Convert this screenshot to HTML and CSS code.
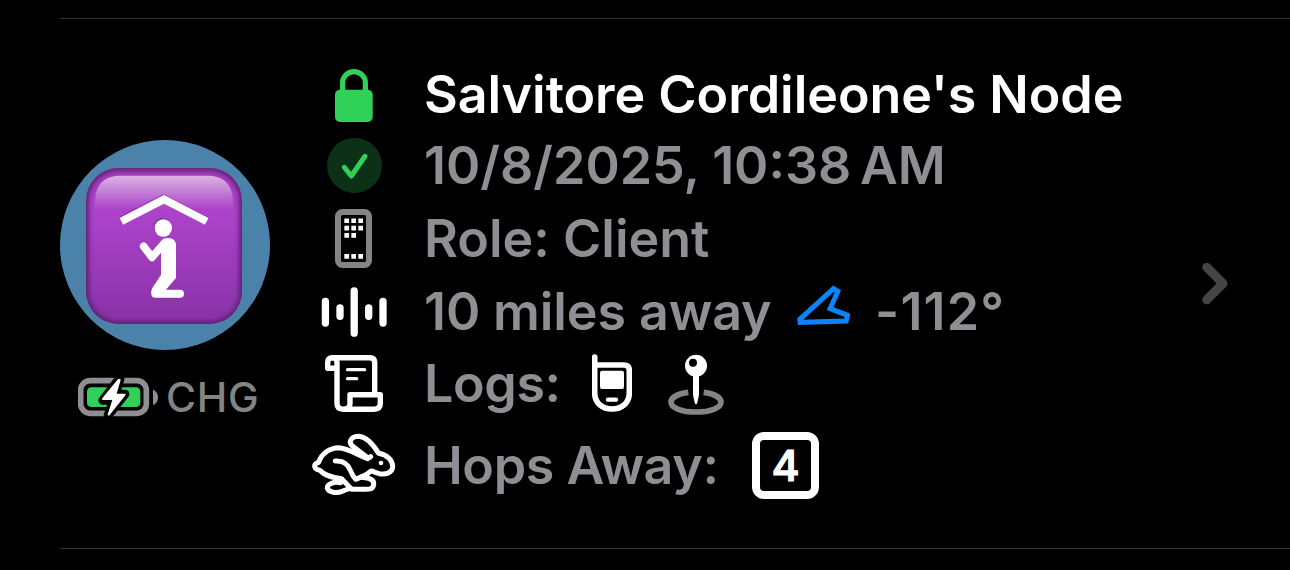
FILE: index.html
```
<!DOCTYPE html>
<html lang="en">
<head>
  <meta charset="UTF-8">
  <meta name="viewport" content="width=device-width, initial-scale=1.0">
  <title>Nodes</title>
  <link rel="stylesheet" href="styles.css">
</head>
<body>
  <div class="node-item">
    <div class="node-badge">
      <svg class="avatar" viewBox="30 30 630 630">
        <defs>
          <linearGradient id="tile" x1="0" y1="0" x2="0" y2="1">
            <stop offset="0" stop-color="#a03cb8"/>
            <stop offset="0.28" stop-color="#ad43cb"/>
            <stop offset="1" stop-color="#8732a6"/>
          </linearGradient>
          <linearGradient id="gloss" x1="0" y1="0" x2="0" y2="1">
            <stop offset="0" stop-color="#fff" stop-opacity="0.62"/>
            <stop offset="1" stop-color="#fff" stop-opacity="0"/>
          </linearGradient>
          <filter id="soft" x="-10%" y="-10%" width="120%" height="120%">
            <feGaussianBlur stdDeviation="7"/>
          </filter>
          <clipPath id="tileClip"><rect x="108" y="114" width="468" height="468" rx="98"/></clipPath>
        </defs>
        <circle cx="345" cy="345" r="315" fill="#4a82aa"/>
        <rect x="108" y="114" width="468" height="468" rx="98" fill="url(#tile)"/>
        <g clip-path="url(#tileClip)">
          <rect x="108" y="114" width="468" height="468" rx="98" fill="none" stroke="#5c2070" stroke-width="17" filter="url(#soft)"/>
        </g>
        <path d="M135 238V218C135 160 165 137 215 137H469C519 137 549 160 549 218V238Z" fill="url(#gloss)"/>
        <g transform="translate(-2 -3)" fill="none" stroke="#71348a" stroke-opacity="0.6">
          <path d="M214 274L342 208L470 274" stroke-width="23"/>
          <circle cx="340" cy="294" r="26" fill="#71348a"/>
        </g>
        <g fill="none" stroke="#fff" stroke-linecap="round" stroke-linejoin="round">
          <path d="M214 274L342 208L470 274" stroke-width="23" stroke-linecap="butt" stroke-linejoin="miter"/>
          <path d="M281 349L306 382L344 338" stroke-width="23"/>
          <path d="M316 491H390" stroke-width="24"/>
        </g>
        <circle cx="340" cy="294" r="26" fill="#fff"/>
        <path d="M333 370L326 344Q338 324 354 324Q378 324 378 348V444L347 480L325 502C306 502 299 488 307 474L333 434Z" fill="#fff"/>
      </svg>
      <div class="battery">
        <svg class="battery-icon" viewBox="84 738 240 126">
          <rect x="92" y="752" width="197" height="98" rx="28" fill="none" stroke="#8e8e93" stroke-width="17"/>
          <path d="M309 779C329 785 329 819 309 825Z" fill="#8e8e93"/>
          <rect x="111" y="772" width="160" height="59" rx="13" fill="#30d158"/>
          <path d="M207 747L158 811H189L174 857L225 792H197L210 748Z" fill="#fff" stroke="#000" stroke-width="26" stroke-linejoin="round"/>
          <path d="M206 750L159 807H191L176 854L224 794H196L209 750Z" fill="#fff" stroke="#fff" stroke-width="6" stroke-linejoin="round"/>
        </svg>
        <span>CHG</span>
      </div>
    </div>

    <div class="details">
      <svg class="icon" viewBox="0 0 84 71">
        <rect x="23" y="30.7" width="37.7" height="32.3" rx="5" fill="#30d158"/>
        <path d="M30.6 33V24a11.4 11.4 0 0 1 22.8 0V33" fill="none" stroke="#30d158" stroke-width="5.2"/>
      </svg>
      <div class="line name">Salvitore Cordileone's Node</div>

      <svg class="icon" viewBox="0 0 84 71">
        <circle cx="42.5" cy="35.5" r="27.5" fill="#0d3117"/>
        <path d="M32.3 37.3L39.3 46L53 26.3" fill="none" stroke="#30d158" stroke-width="5" stroke-linecap="round" stroke-linejoin="round"/>
      </svg>
      <div class="line date">10/8/2025, 10:38&#8239;AM</div>

      <svg class="icon" viewBox="0 0 84 74">
        <rect x="26" y="11" width="31" height="53" rx="4.5" fill="none" stroke="#848484" stroke-width="6"/>
        <path d="M34.7 17.4v21M41.7 17.4v21M48.7 17.4v14M34.7 53v4.7M41.7 53v4.7M48.7 53v4.7" fill="none" stroke="#fff" stroke-width="4.7" stroke-dasharray="4.7 2.6"/>
      </svg>
      <div class="line role">Role: Client</div>

      <svg class="icon" viewBox="0 0 84 72">
        <path d="M13.4 26.5V48M28 33V41.3M42.2 16V58.2M56.7 33V41.3M71 26.5V48" fill="none" stroke="#fff" stroke-width="7.3" stroke-linecap="round"/>
      </svg>
      <div class="line distance">
        <span class="miles">10 miles away</span>
        <svg class="bearing" viewBox="172 45 158 156">
          <path d="M281 56L294 64L271 116L323 136L319 153L181 157L180 148Z" fill="none" stroke="#0a84ff" stroke-width="15"/>
        </svg>
        <span class="degrees">-112°</span>
      </div>

      <svg class="icon" viewBox="0 0 84 72">
        <g fill="none" stroke="#fff" stroke-width="5.4" stroke-linejoin="round">
          <path d="M25.3 21.3H15.7V15.5Q15.7 10.7 20.3 10.7H58Q62.7 10.7 62.7 15.5V47.5"/>
          <path d="M20.3 10.7Q25 10.7 25 15.5V56.5Q25 62.2 31.4 62.2H62Q68.3 62.2 68.3 56.3V47.7H38V56.5Q38 62.2 31.4 62.2"/>
          <path d="M35.5 22.7H52.7M35.5 31.7H44.7" stroke-width="3.2" stroke-linecap="round"/>
        </g>
      </svg>
      <div class="line logs">
        <span class="label">Logs:</span>
        <svg class="log-device" viewBox="66 33 120 192">
          <path d="M74 51V158C74 190 98 207 126 207C154 207 178 190 178 158V91Q178 75 162 75H74" fill="none" stroke="#fff" stroke-width="17" stroke-linecap="round"/>
          <rect x="90" y="92" width="72" height="55" rx="6" fill="#fff"/>
          <path d="M114 179H138" stroke="#fff" stroke-width="13" stroke-linecap="round"/>
        </svg>
        <svg class="log-position" viewBox="294 33 168 192">
          <path d="M355 157C324 161 303 172 303 187C303 204 336 216 378 216C420 216 453 204 453 187C453 172 432 161 401 157" fill="none" stroke="#848484" stroke-width="17"/>
          <circle cx="378" cy="77" r="33" fill="#fff"/>
          <circle cx="369" cy="68" r="12" fill="#000"/>
          <path d="M369 105H387V164L382 188Q378 198 374 188L369 164Z" fill="#fff"/>
        </svg>
      </div>

      <svg class="icon" viewBox="36 222 252 276">
        <g fill="none" stroke="#fff" stroke-width="15" stroke-linecap="round" stroke-linejoin="round">
          <path d="M204 339L160 305C142 292 153 274 177 274C200 276 219 298 236 325C262 329 279 347 278 367C276 385 256 389 238 386C228 384 220 378 213 378C205 386 194 392 182 397C206 399 223 402 221 418C219 433 208 433 196 433H156C143 423 136 412 125 401C100 398 76 394 60 376C41 372 38 358 56 352C64 326 90 308 116 308C143 309 172 329 203 341L212 335"/>
          <path d="M106 348C134 346 146 361 152 378Q158 394 167 403L186 395"/>
          <path d="M122 413C100 409 80 418 82 430C86 443 110 445 126 439Q138 434 150 431"/>
        </g>
        <circle cx="243" cy="354" r="7" fill="#fff"/>
      </svg>
      <div class="line hops">
        <span class="label">Hops Away:</span>
        <span class="hop-count">4</span>
      </div>
    </div>

    <svg class="chevron" viewBox="0 0 26 42">
      <path d="M4.8 4.3L21 20.5L4.8 36.7" fill="none" stroke="#454545" stroke-width="9" stroke-linecap="round" stroke-linejoin="round"/>
    </svg>
  </div>
</body>
</html>
```
FILE: styles.css
```
:root {
  --text-primary: #fff;
  --text-secondary: #8e8e93;
  --separator: #353538;
}

body {
  margin: 0;
  padding: 18px 0 0 60px;
  background: #000;
  color: var(--text-secondary);
  font-family: Inter, "Liberation Sans", sans-serif;
}

svg {
  display: block;
  flex-shrink: 0;
}

.node-item {
  box-sizing: border-box;
  height: 531px;
  display: flex;
  align-items: center;
  padding-right: 62px;
  border-top: 1px solid var(--separator);
  border-bottom: 1px solid var(--separator);
}

.node-badge {
  width: 210px;
  display: flex;
  flex-direction: column;
  gap: 18px;
}

.avatar {
  width: 210px;
  height: 210px;
}

.battery {
  box-sizing: border-box;
  height: 59px;
  display: flex;
  align-items: center;
  gap: 8px;
  padding: 0 0 1px 18px;
  font-size: 41px;
  font-weight: 500;
  letter-spacing: 0.7px;
  color: #848484;
}

.battery-icon {
  width: 80px;
  height: 42px;
}

.details {
  align-self: flex-start;
  margin: 40px 0 0 42px;
  display: grid;
  grid-template-columns: 84px auto;
  grid-template-rows: 71px 71px 74px 72px 72px 92px;
  column-gap: 28px;
}

.icon {
  width: 84px;
  height: 100%;
}

.line {
  display: flex;
  align-items: center;
  font-size: 52px;
  font-weight: 600;
  white-space: nowrap;
}

.name {
  color: var(--text-primary);
  letter-spacing: -0.04px;
}

.miles {
  width: 345px;
  letter-spacing: -0.1px;
}

.bearing {
  width: 53px;
  height: 52px;
  margin: 0 25px 0 28px;
}

.degrees {
  letter-spacing: 1.2px;
}

.label {
  letter-spacing: -0.4px;
}

.logs .label {
  width: 136px;
}

.log-device {
  width: 40px;
  height: 64px;
  margin: 0 36px 0 32px;
}

.log-position {
  width: 56px;
  height: 64px;
}

.hops .label {
  width: 295px;
}

.hop-count {
  box-sizing: border-box;
  width: 67px;
  height: 67px;
  margin-left: 33px;
  display: flex;
  align-items: center;
  justify-content: center;
  border: 8px solid #fff;
  border-radius: 12px;
  color: var(--text-primary);
  font-size: 43px;
  font-weight: 500;
  letter-spacing: 0;
  -webkit-text-stroke: 1.2px #fff;
}

.chevron {
  width: 26px;
  height: 42px;
  margin-left: auto;
}
```
